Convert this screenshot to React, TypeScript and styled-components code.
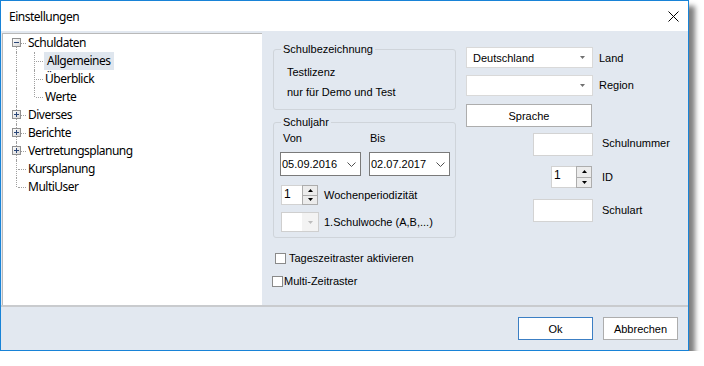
import React from "react";
import styled, { createGlobalStyle } from "styled-components";

const GlobalStyle = createGlobalStyle`
  html, body { margin: 0; padding: 0; background: #ffffff; }
  body { font-family: "Liberation Sans", Arial, sans-serif; font-size: 11px; color: #000; }
  * { box-sizing: border-box; }
`;

const Win = styled.div`
  width: 689px;
  height: 351px;
  border: 1px solid #1883d7;
  display: flex;
  flex-direction: column;
  box-shadow: 6px 6px 5px rgba(0, 0, 0, 0.5);
  background: #e2e8f0;
`;

const TitleBar = styled.div`
  height: 30px;
  flex: none;
  background: #ffffff;
  display: flex;
  align-items: center;
  justify-content: space-between;
  padding: 0 9px 0 8px;
  font-family: "Noto Sans", sans-serif;
  font-size: 12px;
  letter-spacing: -0.5px;
`;

const Main = styled.div`
  height: 274px;
  flex: none;
  display: flex;
`;

const Tree = styled.div`
  margin: 2px 0 0 1px;
  width: 260px;
  background: #ffffff;
  border-top: 1px solid #b9b9b9;
  border-left: 1px solid #b9b9b9;
  font-family: "Noto Sans", sans-serif;
  font-size: 12px;
  letter-spacing: -0.5px;
  display: flex;
  flex-direction: column;
`;

const TreeRow = styled.div`
  display: flex;
  height: 18px;
  align-items: stretch;
`;

type LineKind = "full" | "top" | "bottom" | "none";

const Gutter = styled.span<{ $w: number; $x: number; $line: LineKind; $branch: boolean }>`
  position: relative;
  flex: none;
  width: ${(p) => p.$w}px;
  &::before {
    content: "";
    display: ${(p) => (p.$line === "none" ? "none" : "block")};
    position: absolute;
    left: ${(p) => p.$x}px;
    top: ${(p) => (p.$line === "bottom" ? "9px" : "0")};
    bottom: ${(p) => (p.$line === "top" ? "9px" : "0")};
    border-left: 1px dotted #a0a0a0;
  }
  &::after {
    content: "";
    display: ${(p) => (p.$branch ? "block" : "none")};
    position: absolute;
    left: ${(p) => p.$x + 2}px;
    right: 1px;
    top: 9px;
    border-top: 1px dotted #a0a0a0;
  }
`;

const Expander = styled.svg`
  position: absolute;
  left: 9px;
  top: 4px;
  z-index: 1;
`;

const TreeLabel = styled.span<{ $selected?: boolean }>`
  line-height: 18px;
  padding: 0 3px 0 ${(p) => (p.$selected ? 3 : 1)}px;
  background: ${(p) => (p.$selected ? "#dfe6ee" : "transparent")};
  white-space: nowrap;
`;

const Panel = styled.div`
  flex: 1;
  display: flex;
  align-items: flex-start;
`;

const LeftCol = styled.div`
  margin: 12px 0 0 10px;
  width: 184px;
  display: flex;
  flex-direction: column;
`;

const Group = styled.fieldset<{ $top: number }>`
  margin: ${(p) => p.$top}px 0 0 1px;
  padding: 0;
  width: 183px;
  border: 1px solid #cfd4da;
  border-radius: 3px;
  min-width: 0;
`;

const Legend = styled.legend`
  margin-left: 7px;
  padding: 0 2px;
  line-height: 13px;
  font-size: 11px;
`;

const GroupBody = styled.div<{ $pad: string }>`
  padding: ${(p) => p.$pad};
  display: flex;
  flex-direction: column;
`;

const InfoLine = styled.div`
  line-height: 20px;
  height: 20px;
`;

const FlexRow = styled.div<{ $top?: number; $gap?: number; $indent?: number }>`
  display: flex;
  align-items: center;
  margin-top: ${(p) => p.$top ?? 0}px;
  gap: ${(p) => p.$gap ?? 0}px;
  padding-left: ${(p) => p.$indent ?? 0}px;
`;

const SmallLabel = styled.span<{ $w?: number; $pad?: number; $lift?: number }>`
  width: ${(p) => (p.$w ? `${p.$w}px` : "auto")};
  padding-left: ${(p) => p.$pad ?? 0}px;
  margin-bottom: ${(p) => p.$lift ?? 0}px;
  line-height: 14px;
  white-space: nowrap;
`;

const DateBox = styled.div`
  width: 81px;
  height: 24px;
  background: #fff;
  border: 1px solid #7a7a7a;
  display: flex;
  align-items: center;
  justify-content: space-between;
  padding: 0 4px 0 1px;
  font-size: 11px;
`;

const Spinner = styled.div<{ $w: number; $h: number }>`
  width: ${(p) => p.$w}px;
  height: ${(p) => p.$h}px;
  display: flex;
  flex: none;
`;

const SpinInput = styled.div`
  flex: 1;
  background: #fff;
  border: 1px solid #d2d2d2;
  border-right: none;
  padding: 1px 0 0 2px;
  font-size: 12px;
  line-height: 14px;
`;

const SpinArrows = styled.div`
  width: 16px;
  display: flex;
  flex-direction: column;
  border: 1px solid #adadad;
  background: #adadad;
  gap: 1px;
`;

const SpinBtn = styled.div`
  flex: 1;
  background: #ececec;
  display: flex;
  align-items: center;
  justify-content: center;
`;

const DisabledCombo = styled.div`
  width: 38px;
  height: 20px;
  border: 1px solid #cfcfcf;
  display: flex;
  background: #fff;
`;

const DisabledArrow = styled.div`
  margin-left: auto;
  width: 16px;
  background: #f3f3f3;
  display: flex;
  align-items: center;
  justify-content: center;
`;

const Check = styled.span`
  width: 11px;
  height: 11px;
  background: #fff;
  border: 1px solid #8a8a8a;
  flex: none;
`;

const RightCol = styled.div`
  margin: 16px 0 0 10px;
  display: flex;
  flex-direction: column;
`;

const Combo = styled.div`
  width: 127px;
  height: 21px;
  background: #fff;
  border: 1px solid #d9d9d9;
  display: flex;
  align-items: center;
  justify-content: space-between;
  padding: 0 7px 0 6px;
`;

const Field = styled.div`
  width: 60px;
  height: 23px;
  background: #fff;
  border: 1px solid #d3d3d3;
`;

const Button = styled.div<{ $w: number; $primary?: boolean }>`
  width: ${(p) => p.$w}px;
  height: 23px;
  flex: none;
  background: #fff;
  border: 1px solid ${(p) => (p.$primary ? "#3c7fc4" : "#adadad")};
  display: flex;
  align-items: center;
  justify-content: center;
  font-size: 11px;
`;

const Footer = styled.div`
  flex: 1;
  border-top: 2px solid #c9cbce;
  display: flex;
  justify-content: flex-end;
  align-items: flex-start;
  padding: 10px 10px 0 0;
  gap: 10px;
`;

const CloseIcon = () => (
  <svg width="11" height="11" viewBox="0 0 11 11">
    <path d="M0.5 0.5 L10.5 10.5 M10.5 0.5 L0.5 10.5" stroke="#000" strokeWidth="1" />
  </svg>
);

const ExpandIcon = ({ plus }: { plus?: boolean }) => (
  <Expander width="9" height="9" viewBox="0 0 9 9">
    <defs>
      <linearGradient id={plus ? "gp" : "gm"} x1="0" y1="0" x2="1" y2="1">
        <stop offset="0" stopColor="#ffffff" />
        <stop offset="1" stopColor="#d6d6d6" />
      </linearGradient>
    </defs>
    <rect x="0.5" y="0.5" width="8" height="8" fill={`url(#${plus ? "gp" : "gm"})`} stroke="#919191" />
    <path d="M2 4.5 H7" stroke="#2b4778" />
    {plus && <path d="M4.5 2 V7" stroke="#2b4778" />}
  </Expander>
);

const ComboArrow = ({ color = "#707070" }: { color?: string }) => (
  <svg width="5" height="3" viewBox="0 0 5 3">
    <polygon points="0,0 5,0 2.5,3" fill={color} />
  </svg>
);

const Chevron = () => (
  <svg width="9" height="5" viewBox="0 0 9 5">
    <polyline points="0.5,0.5 4.5,4.5 8.5,0.5" fill="none" stroke="#505050" />
  </svg>
);

const Tri = ({ up }: { up?: boolean }) => (
  <svg width="5" height="3" viewBox="0 0 5 3">
    <polygon points={up ? "2.5,0 5,3 0,3" : "0,0 5,0 2.5,3"} fill="#000" />
  </svg>
);

type TopItem = { label: string; exp?: "plus" | "minus"; line: LineKind };

const children = [
  { label: "Allgemeines", selected: true, line: "full" as LineKind },
  { label: "Überblick", line: "full" as LineKind },
  { label: "Werte", line: "top" as LineKind },
];

const rest: TopItem[] = [
  { label: "Diverses", exp: "plus", line: "full" },
  { label: "Berichte", exp: "plus", line: "full" },
  { label: "Vertretungsplanung", exp: "plus", line: "full" },
  { label: "Kursplanung", line: "full" },
  { label: "MultiUser", line: "top" },
];

export default function App() {
  return (
    <>
      <GlobalStyle />
      <Win>
        <TitleBar>
          <span>Einstellungen</span>
          <CloseIcon />
        </TitleBar>
        <Main>
          <Tree>
            <TreeRow>
              <Gutter $w={24} $x={13} $line="bottom" $branch>
                <ExpandIcon />
              </Gutter>
              <TreeLabel>Schuldaten</TreeLabel>
            </TreeRow>
            {children.map((c) => (
              <TreeRow key={c.label}>
                <Gutter $w={24} $x={13} $line="full" $branch={false} />
                <Gutter $w={17} $x={7} $line={c.line} $branch />
                <TreeLabel $selected={c.selected}>{c.label}</TreeLabel>
              </TreeRow>
            ))}
            {rest.map((r) => (
              <TreeRow key={r.label}>
                <Gutter $w={24} $x={13} $line={r.line} $branch>
                  {r.exp && <ExpandIcon plus />}
                </Gutter>
                <TreeLabel>{r.label}</TreeLabel>
              </TreeRow>
            ))}
          </Tree>
          <Panel>
            <LeftCol>
              <Group $top={0}>
                <Legend>Schulbezeichnung</Legend>
                <GroupBody $pad="6px 0 7px 13px">
                  <InfoLine>Testlizenz</InfoLine>
                  <InfoLine>nur für Demo und Test</InfoLine>
                </GroupBody>
              </Group>
              <Group $top={6}>
                <Legend>Schuljahr</Legend>
                <GroupBody $pad="2px 0 5px 6px">
                  <FlexRow>
                    <SmallLabel $w={89} $pad={3}>Von</SmallLabel>
                    <SmallLabel $pad={1}>Bis</SmallLabel>
                  </FlexRow>
                  <FlexRow $top={7} $gap={8}>
                    <DateBox>
                      <span>05.09.2016</span>
                      <Chevron />
                    </DateBox>
                    <DateBox>
                      <span>02.07.2017</span>
                      <Chevron />
                    </DateBox>
                  </FlexRow>
                  <FlexRow $top={9} $gap={6} $indent={1}>
                    <Spinner $w={37} $h={20}>
                      <SpinInput>1</SpinInput>
                      <SpinArrows>
                        <SpinBtn><Tri up /></SpinBtn>
                        <SpinBtn><Tri /></SpinBtn>
                      </SpinArrows>
                    </Spinner>
                    <SmallLabel>Wochenperiodizität</SmallLabel>
                  </FlexRow>
                  <FlexRow $top={7} $gap={5} $indent={1}>
                    <DisabledCombo>
                      <DisabledArrow>
                        <ComboArrow color="#bdbdbd" />
                      </DisabledArrow>
                    </DisabledCombo>
                    <SmallLabel>1.Schulwoche (A,B,...)</SmallLabel>
                  </FlexRow>
                </GroupBody>
              </Group>
              <FlexRow $top={13} $gap={3} $indent={3}>
                <Check />
                <SmallLabel>Tageszeitraster aktivieren</SmallLabel>
              </FlexRow>
              <FlexRow $top={9} $gap={1} $indent={0}>
                <Check />
                <SmallLabel>Multi-Zeitraster</SmallLabel>
              </FlexRow>
            </LeftCol>
            <RightCol>
              <FlexRow $gap={6}>
                <Combo>
                  <span>Deutschland</span>
                  <ComboArrow />
                </Combo>
                <SmallLabel>Land</SmallLabel>
              </FlexRow>
              <FlexRow $top={7} $gap={6}>
                <Combo>
                  <span />
                  <ComboArrow />
                </Combo>
                <SmallLabel $lift={2}>Region</SmallLabel>
              </FlexRow>
              <FlexRow $top={8}>
                <Button $w={126}>Sprache</Button>
              </FlexRow>
              <FlexRow $top={6} $gap={9} $indent={67}>
                <Field />
                <SmallLabel $lift={3}>Schulnummer</SmallLabel>
              </FlexRow>
              <FlexRow $top={10} $gap={10} $indent={85}>
                <Spinner $w={41} $h={22}>
                  <SpinInput>1</SpinInput>
                  <SpinArrows>
                    <SpinBtn><Tri up /></SpinBtn>
                    <SpinBtn><Tri /></SpinBtn>
                  </SpinArrows>
                </Spinner>
                <SmallLabel>ID</SmallLabel>
              </FlexRow>
              <FlexRow $top={11} $gap={9} $indent={67}>
                <Field />
                <SmallLabel $lift={2}>Schulart</SmallLabel>
              </FlexRow>
            </RightCol>
          </Panel>
        </Main>
        <Footer>
          <Button $w={75} $primary>Ok</Button>
          <Button $w={75}>Abbrechen</Button>
        </Footer>
      </Win>
    </>
  );
}
